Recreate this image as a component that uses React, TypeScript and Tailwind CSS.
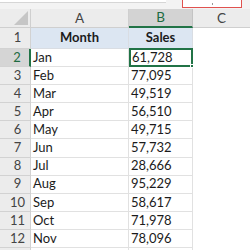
const rows: [string, string][] = [
  ['Jan', '61,728'],
  ['Feb', '77,095'],
  ['Mar', '49,519'],
  ['Apr', '56,510'],
  ['May', '49,715'],
  ['Jun', '57,732'],
  ['Jul', '28,666'],
  ['Aug', '95,229'],
  ['Sep', '58,617'],
  ['Oct', '71,978'],
  ['Nov', '78,096'],
  ['', ''],
];

export default function App() {
  return (
    <div className="w-[250px] h-[250px] overflow-hidden bg-white text-[#1b1b1b] font-['Lato',sans-serif] flex flex-col">
      {/* formula bar remnant */}
      <div className="h-[9px] shrink-0 flex bg-[#f3f3f3]">
        <div className="w-[166px] h-[3px] bg-white border-b border-[#d6d6d6]" />
        <div className="w-[16px]" />
        <div className="w-[60px] h-[8px] bg-white border border-t-0 border-[#e0524f] flex justify-center">
          <div className="w-px h-[2px] mt-[3px] bg-[#999]" />
        </div>
      </div>

      {/* column headers */}
      <div className="h-[19px] shrink-0 flex bg-[#ececec] text-[13.5px] text-[#444]">
        <div className="w-[31px] shrink-0 border-r border-b border-[#cfcfcf] flex items-end justify-end">
          <svg width="16" height="15" viewBox="0 0 16 15" className="mb-[1px] mr-[1px]">
            <polygon points="1,14 15,14 15,0" fill="#c6c6c6" />
          </svg>
        </div>
        <div className="w-[98px] shrink-0 border-r border-b border-[#cfcfcf] flex items-center justify-center">A</div>
        <div className="w-[64px] shrink-0 bg-[#d3d3d3] border-r border-[#c4c4c4] border-b-2 border-b-[#217346] text-[#1e6b41] flex items-center justify-center">B</div>
        <div className="flex-1 border-b border-[#cfcfcf] flex items-center justify-center">C</div>
      </div>

      {/* header row 1 */}
      <div className="h-[21px] shrink-0 flex text-[13px]">
        <div className="w-[31px] shrink-0 bg-[#ececec] border-r border-b border-[#d2d2d2] text-[#444] pl-[5px] flex items-center justify-center">1</div>
        <div className="w-[98px] shrink-0 bg-[#dce6f2] border-r border-b border-[#d9dde3] font-bold flex items-center justify-center">Month</div>
        <div className="w-[64px] shrink-0 bg-[#dce6f2] border-r border-b border-[#d9dde3] font-bold flex items-center justify-center">Sales</div>
        <div className="flex-1" />
      </div>

      {rows.map(([m, s], i) => {
        const n = i + 2;
        const sel = n === 2;
        const label = n <= 12 ? n : '';
        return (
          <div key={n} className="h-[18.1px] shrink-0 flex text-[13px]">
            {sel ? (
              <div className="w-[31px] shrink-0 bg-[#d5d5d5] border-r-2 border-r-[#217346] border-b border-[#d2d2d2] text-[#1e6b41] pl-[5px] flex items-center justify-center">{label}</div>
            ) : (
              <div className="w-[31px] shrink-0 bg-[#ececec] border-r border-b border-[#d2d2d2] text-[#444] pl-[5px] flex items-center justify-center">{label}</div>
            )}
            <div className="w-[98px] shrink-0 border-r border-b border-[#e1e1e1] pl-[2px] flex items-center">{m}</div>
            {sel ? (
              <div className="relative w-[64px] shrink-0 border-2 border-[#217346] -mt-px pl-[1px] flex items-center">
                {s}
                <div className="absolute -right-[3px] -bottom-[3px] w-[4px] h-[4px] bg-[#217346] border border-white" />
              </div>
            ) : (
              <div className="w-[64px] shrink-0 border-r border-b border-[#e1e1e1] pl-[2px] flex items-center">{s}</div>
            )}
            <div className="flex-1" />
          </div>
        );
      })}
    </div>
  );
}
